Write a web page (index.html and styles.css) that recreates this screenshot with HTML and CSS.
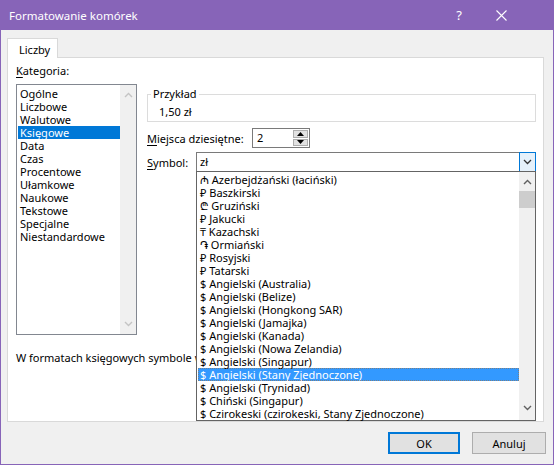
FILE: index.html
```html
<!DOCTYPE html>
<html lang="pl">
<head>
    <meta charset="UTF-8">
    <title>Formatowanie komórek</title>
    <link rel="stylesheet" href="styles.css">
</head>
<body>
    <div class="window">
        <div class="titlebar">
            <span class="title">Formatowanie komórek</span>
            <span class="title-btn">?</span>
            <span class="title-btn">
                <svg width="11" height="11" viewBox="0 0 11 11"><path d="M0.5 0.5 L10.5 10.5 M10.5 0.5 L0.5 10.5" stroke="#fff" stroke-width="1.1" fill="none"/></svg>
            </span>
        </div>

        <div class="client">
            <div class="tabs">
                <div class="tab">Liczby</div>
            </div>

            <div class="panel">
                <div class="columns">
                    <div class="category">
                        <div class="label"><u>K</u>ategoria:</div>
                        <div class="listbox">
                            <ul class="items">
                                <li>Ogólne</li>
                                <li>Liczbowe</li>
                                <li>Walutowe</li>
                                <li class="selected">Księgowe</li>
                                <li>Data</li>
                                <li>Czas</li>
                                <li>Procentowe</li>
                                <li>Ułamkowe</li>
                                <li>Naukowe</li>
                                <li>Tekstowe</li>
                                <li>Specjalne</li>
                                <li>Niestandardowe</li>
                            </ul>
                            <div class="vscroll off">
                                <svg width="9" height="6" viewBox="0 0 9 6"><path d="M1 5 L4.5 1.5 L8 5" stroke="#c4c4c4" stroke-width="1.4" fill="none"/></svg>
                                <svg width="9" height="6" viewBox="0 0 9 6"><path d="M1 1 L4.5 4.5 L8 1" stroke="#c4c4c4" stroke-width="1.4" fill="none"/></svg>
                            </div>
                        </div>
                    </div>

                    <div class="options">
                        <fieldset class="sample">
                            <legend>Przykład</legend>
                            <div class="sample-value">1,50 zł</div>
                        </fieldset>

                        <div class="row">
                            <span class="row-label decimals-label"><u>M</u>iejsca dziesiętne:</span>
                            <div class="spin">
                                <span class="spin-value">2</span>
                                <div class="spin-btns">
                                    <span class="spin-btn"><svg width="7" height="4" viewBox="0 0 7 4"><path d="M0 4 L3.5 0 L7 4 Z" fill="#000"/></svg></span>
                                    <span class="spin-btn"><svg width="7" height="4" viewBox="0 0 7 4"><path d="M0 0 L3.5 4 L7 0 Z" fill="#000"/></svg></span>
                                </div>
                            </div>
                        </div>

                        <div class="row">
                            <span class="row-label symbol-label"><u>S</u>ymbol:</span>
                            <div class="combo">
                                <span class="combo-value">zł</span>
                                <span class="combo-btn">
                                    <svg width="9" height="6" viewBox="0 0 9 6"><path d="M1 1 L4.5 4.5 L8 1" stroke="#333" stroke-width="1.3" fill="none"/></svg>
                                </span>

                                <div class="dropdown">
                                    <ul class="items">
                                        <li>₼ Azerbejdżański (łaciński)</li>
                                        <li>₽ Baszkirski</li>
                                        <li>₾ Gruziński</li>
                                        <li>₽ Jakucki</li>
                                        <li>₸ Kazachski</li>
                                        <li>֏ Ormiański</li>
                                        <li>₽ Rosyjski</li>
                                        <li>₽ Tatarski</li>
                                        <li>$ Angielski (Australia)</li>
                                        <li>$ Angielski (Belize)</li>
                                        <li>$ Angielski (Hongkong SAR)</li>
                                        <li>$ Angielski (Jamajka)</li>
                                        <li>$ Angielski (Kanada)</li>
                                        <li>$ Angielski (Nowa Zelandia)</li>
                                        <li>$ Angielski (Singapur)</li>
                                        <li class="selected focus">$ Angielski (Stany Zjednoczone)</li>
                                        <li>$ Angielski (Trynidad)</li>
                                        <li>$ Chiński (Singapur)</li>
                                        <li>$ Czirokeski (czirokeski, Stany Zjednoczone)</li>
                                    </ul>
                                    <div class="vscroll">
                                        <svg width="9" height="6" viewBox="0 0 9 6"><path d="M1 5 L4.5 1.5 L8 5" stroke="#606060" stroke-width="1.4" fill="none"/></svg>
                                        <span class="thumb"></span>
                                        <span class="spacer"></span>
                                        <svg width="9" height="6" viewBox="0 0 9 6"><path d="M1 1 L4.5 4.5 L8 1" stroke="#606060" stroke-width="1.4" fill="none"/></svg>
                                    </div>
                                </div>
                            </div>
                        </div>
                    </div>
                </div>

                <p class="note">W formatach księgowych symbole walut i przecinki dziesiętne w kolumnie są wyrównane.</p>
            </div>

            <div class="buttons">
                <button class="btn default">OK</button>
                <button class="btn cancel">Anuluj</button>
            </div>
        </div>
    </div>
</body>
</html>
```

FILE: styles.css
```css
body {
    margin: 0;
    padding: 0;
    font-family: "Noto Sans", "Liberation Sans", sans-serif;
    font-size: 11px;
    color: #000;
}

u {
    text-decoration: underline;
    text-underline-offset: 2px;
}

.window {
    width: 554px;
    height: 465px;
    box-sizing: border-box;
    border: 1px solid #8764b8;
    border-top: 0;
    background: #f0f0f0;
    display: flex;
    flex-direction: column;
}

.titlebar {
    height: 30px;
    background: #8764b8;
    color: #fff;
    display: flex;
    align-items: center;
    padding-right: 32px;
    margin: 0 -1px;
}

.title {
    padding-left: 9px;
    flex: 1;
    font-size: 11.5px;
}

.title-btn {
    width: 42px;
    height: 30px;
    display: flex;
    align-items: center;
    justify-content: center;
    font-size: 13px;
}

.client {
    flex: 1;
    padding: 8px 0 0 6px;
    display: flex;
    flex-direction: column;
}

.tabs {
    display: flex;
}

.tab {
    height: 20px;
    box-sizing: border-box;
    padding: 0 11px;
    background: #fff;
    border: 1px solid #d9d9d9;
    border-bottom: 0;
    line-height: 22px;
    margin-bottom: -1px;
    position: relative;
    z-index: 1;
    width: 51px;
}

.panel {
    height: 365px;
    box-sizing: border-box;
    margin-right: 9px;
    background: #fff;
    border: 1px solid #d9d9d9;
    padding: 5px 7px 0 8px;
}

.columns {
    display: flex;
    gap: 10px;
}

.category {
    width: 121px;
    flex-shrink: 0;
}

.label {
    line-height: 15px;
    margin-bottom: 6px;
}

.listbox {
    height: 251px;
    box-sizing: border-box;
    border: 1px solid #828790;
    display: flex;
}

.items {
    list-style: none;
    margin: 0;
    padding: 1px 0 0 1px;
    flex: 1;
    min-width: 0;
}

.listbox .items {
    padding-top: 2px;
}

.items li {
    height: 13px;
    line-height: 13px;
    padding-left: 2px;
    white-space: nowrap;
}

.items li.selected {
    background: #3399ff;
    color: #fff;
}

.listbox .items li.selected {
    background: #0078d7;
}

.vscroll {
    width: 16px;
    flex-shrink: 0;
    background: #f0f0f0;
    display: flex;
    flex-direction: column;
    align-items: center;
    justify-content: space-between;
    padding: 7px 0;
    box-sizing: border-box;
}

.options {
    flex: 1;
    padding-top: 24px;
}

.sample {
    margin: 0;
    padding: 3px 3px 2px;
    border: 1px solid #dcdcdc;
    min-inline-size: 0;
}

.sample legend {
    padding: 0 2px;
    line-height: 14px;
}

.sample-value {
    padding-left: 8px;
    line-height: 15px;
}

.row {
    display: flex;
    align-items: center;
    margin-top: 6px;
}

.row + .row {
    margin-top: 4px;
}

.row-label {
    line-height: 15px;
    white-space: nowrap;
    flex-shrink: 0;
}

.decimals-label {
    width: 105px;
}

.symbol-label {
    width: 49px;
}

.spin {
    width: 58px;
    height: 20px;
    box-sizing: border-box;
    border: 1px solid #7a7a7a;
    display: flex;
}

.spin-value {
    flex: 1;
    padding-left: 4px;
    line-height: 18px;
}

.spin-btns {
    width: 15px;
    display: flex;
    flex-direction: column;
    gap: 1px;
    padding: 1px 1px 1px 0;
}

.spin-btn {
    flex: 1;
    background: #e1e1e1;
    border: 1px solid #adadad;
    display: flex;
    align-items: center;
    justify-content: center;
}

.combo {
    flex: 1;
    height: 20px;
    box-sizing: border-box;
    border: 1px solid #7a7a7a;
    display: flex;
    position: relative;
}

.combo-value {
    flex: 1;
    padding-left: 3px;
    line-height: 18px;
}

.combo-btn {
    width: 17px;
    box-sizing: border-box;
    margin: -1px -1px -1px 0;
    border: 1px solid #0078d7;
    background: #e5f1fb;
    display: flex;
    align-items: center;
    justify-content: center;
}

.dropdown {
    position: absolute;
    top: 100%;
    left: -1px;
    width: calc(100% + 2px);
    height: 250px;
    box-sizing: border-box;
    border: 1px solid #646464;
    background: #fff;
    display: flex;
    z-index: 5;
}

.dropdown .items {
    padding: 1px 0 0 1px;
}

.dropdown .items li {
    padding-left: 2px;
}

.dropdown .items li.focus {
    outline: 1px dotted rgba(170, 110, 50, 0.6);
    outline-offset: -1px;
}

.dropdown .vscroll {
    padding: 7px 0 9px;
    justify-content: flex-start;
}

.thumb {
    width: 16px;
    height: 17px;
    background: #cdcdcd;
    margin-top: 6px;
}

.spacer {
    flex: 1;
}

.note {
    margin: 15px 0 0;
    line-height: 15px;
    white-space: nowrap;
}

.buttons {
    display: flex;
    justify-content: flex-end;
    gap: 12px;
    margin-top: 10px;
    margin-right: 7px;
}

.btn {
    height: 22px;
    box-sizing: border-box;
    background: #e1e1e1;
    border: 1px solid #adadad;
    font-family: inherit;
    font-size: 11px;
    padding: 0;
}

.btn.default {
    width: 72px;
    border: 2px solid #0078d7;
}

.btn.cancel {
    width: 74px;
}
```
